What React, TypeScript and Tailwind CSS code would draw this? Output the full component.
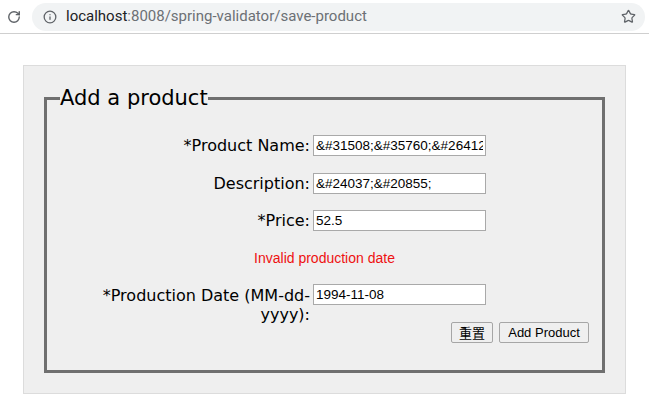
import { Info, RotateCw, Star } from "lucide-react";

const fields = [
    { label: "*Product Name:", value: "&#31508;&#35760;&#26412;", gap: "mt-[25px]" },
    { label: "Description:", value: "&#24037;&#20855;", gap: "mt-[17px]" },
    { label: "*Price:", value: "52.5", gap: "mt-[16px]" },
];

export default function App() {
    return (
        <div className="h-[408px] w-[649px] overflow-hidden bg-white font-['DejaVu_Sans',sans-serif] text-black">
            {/* browser bar */}
            <div className="flex h-[34px] items-center border-b border-[#cfcfcf] bg-white">
                <div className="flex w-[32px] items-center justify-center pr-1">
                    <RotateCw className="h-[14px] w-[14px] text-[#5f6368]" strokeWidth={2.4} />
                </div>
                <div className="flex h-[28px] flex-1 items-center rounded-full bg-[#f1f3f4] pl-[11px] pr-[9px] mr-[4px]">
                    <Info className="h-[14px] w-[14px] text-[#5f6368]" strokeWidth={2.2} />
                    <span className="ml-[9px] font-['Roboto',sans-serif] text-[15px]">
                        <span className="text-[#202124]">localhost</span>
                        <span className="text-[#6c7075]">:8008/spring-validator/save-product</span>
                    </span>
                    <Star className="ml-auto h-[15px] w-[15px] text-[#5f6368]" strokeWidth={2} />
                </div>
            </div>

            {/* page */}
            <div className="ml-[23px] mt-[31px] w-[603px] border border-[#dcdcdc] bg-[#efefef] p-5">
                <fieldset className="border-[3px] border-solid border-[#6f6f6f] pb-[27px]">
                    <legend className="ml-[13px] text-[21px] leading-[24px]">Add a product</legend>

                    {fields.map((f) => (
                        <div key={f.label} className={`${f.gap} flex h-[21px] items-center`}>
                            <div className="ml-[50px] w-[213px] text-right text-[16px]">{f.label}</div>
                            <input
                                readOnly
                                value={f.value}
                                className="ml-[3px] h-[21px] w-[173px] border border-[#a9a9a9] bg-white px-[2px] font-['Liberation_Sans',sans-serif] text-[13.5px] outline-none"
                            />
                        </div>
                    ))}

                    <div className="mt-[20px] text-center font-['Liberation_Sans',sans-serif] text-[14px] leading-[15px] text-[#ee1111]">
                        Invalid production date
                    </div>

                    <div className="mt-[18px] flex h-[38px] items-start">
                        <div className="ml-[50px] mt-[2px] w-[213px] text-right text-[16px] leading-[19px]">
                            *Production Date (MM-dd-
                            <br />
                            yyyy):
                        </div>
                        <input
                            readOnly
                            value="1994-11-08"
                            className="ml-[3px] h-[21px] w-[173px] border border-[#a9a9a9] bg-white px-[2px] font-['Liberation_Sans',sans-serif] text-[13.5px] outline-none"
                        />
                    </div>

                    <div className="flex justify-end gap-[6px] pr-[13px]">
                        <button className="h-[21px] w-[42px] rounded-[2px] border border-[#a6a6a6] bg-[#efefef] font-['Noto_Sans_CJK_SC',sans-serif] text-[13px] leading-none">
                            重置
                        </button>
                        <button className="h-[21px] w-[90px] rounded-[2px] border border-[#a6a6a6] bg-[#efefef] font-['Liberation_Sans',sans-serif] text-[13px] leading-none">
                            Add Product
                        </button>
                    </div>
                </fieldset>
            </div>
        </div>
    );
}
